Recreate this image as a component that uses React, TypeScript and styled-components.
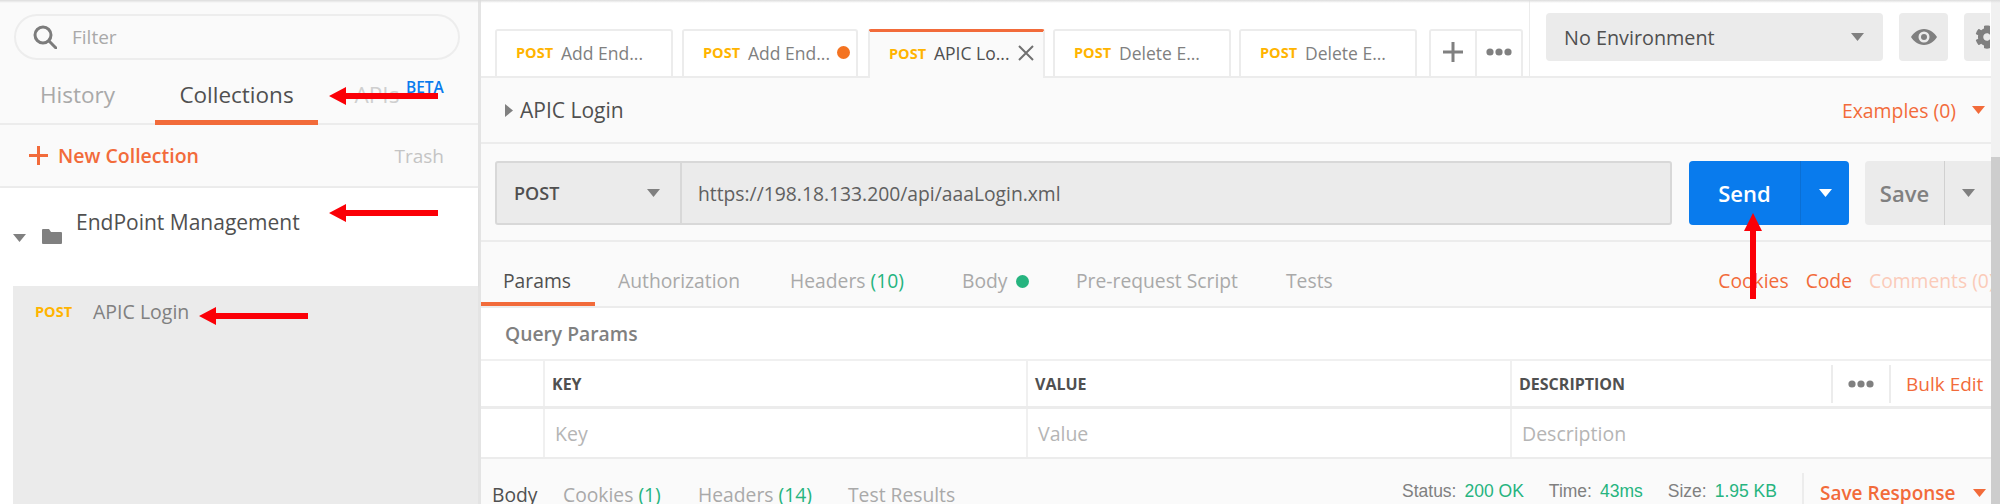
import React from 'react';
import styled, { createGlobalStyle } from 'styled-components';
import { FaCog } from 'react-icons/fa';

const orange = '#f26b3a';
const green = '#26b47f';
const amber = '#ffb400';

const GlobalStyle = createGlobalStyle`
  html, body { margin: 0; padding: 0; background: #fff; }
  * { box-sizing: border-box; }
  body { font-family: "Open Sans", "Noto Sans", sans-serif; }
`;

const Page = styled.div`
  position: relative;
  display: flex;
  width: 2000px;
  height: 504px;
  overflow: hidden;
  background: #fff;
`;

const TopShade = styled.div`
  position: absolute;
  left: 0;
  top: 0;
  right: 0;
  height: 3px;
  background: linear-gradient(#dcdcdc, rgba(255, 255, 255, 0));
`;

/* sidebar */
const Sidebar = styled.aside`
  width: 481px;
  flex: none;
  display: flex;
  flex-direction: column;
  border-right: 3px solid #e4e4e4;
  background: #fafafa;
`;

const SearchArea = styled.div`
  height: 60px;
  flex: none;
  padding: 14px 18px 0 14px;
`;

const SearchBox = styled.div`
  height: 46px;
  display: flex;
  align-items: center;
  gap: 15px;
  padding-left: 17px;
  border: 2px solid #ededed;
  border-radius: 23px;
  font-size: 19px;
  color: #a9a9a9;
`;

const SideTabs = styled.div`
  height: 65px;
  flex: none;
  display: flex;
  border-bottom: 2px solid #ececec;
`;

const SideTab = styled.div<{ $width: number; $active?: boolean }>`
  width: ${p => p.$width}px;
  height: 65px;
  flex: none;
  padding-top: 20px;
  text-align: center;
  font-size: 22.500px;
  line-height: 30px;
  color: ${p => (p.$active ? '#505050' : '#a9a9a9')};
  border-bottom: ${p => (p.$active ? `5px solid ${orange}` : 'none')};
`;

const SideTabFaded = styled(SideTab)`
  position: relative;
  color: #cfcfcf;
`;

const Beta = styled.span`
  position: absolute;
  left: 88px;
  top: 18px;
  font-size: 15.500px;
  line-height: 18px;
  font-weight: 600;
  color: #097bed;
`;

const ActionRow = styled.div`
  height: 63px;
  flex: none;
  display: flex;
  align-items: center;
  justify-content: space-between;
  padding: 0 34px 0 29px;
  border-bottom: 2px solid #ececec;
`;

const NewCollection = styled.div`
  display: flex;
  align-items: center;
  gap: 10px;
  font-size: 19.500px;
  font-weight: 600;
  color: ${orange};
`;

const Trash = styled.div`
  font-size: 19px;
  font-weight: 500;
  color: #c4c4c4;
`;

const FolderRow = styled.div`
  height: 98px;
  flex: none;
  display: flex;
  align-items: flex-start;
  padding: 20px 0 0 13px;
  background: #fff;
  box-shadow: 0 1px 2px rgba(0, 0, 0, 0.06);
`;

const FolderCaret = styled.svg`
  margin-top: 26px;
  flex: none;
`;

const FolderIcon = styled.svg`
  margin: 21px 0 0 16px;
  flex: none;
`;

const FolderName = styled.div`
  margin-left: 14px;
  font-size: 21px;
  line-height: 28px;
  color: #505050;
`;

const RequestArea = styled.div`
  flex: 1;
  background: #fff;
  padding-left: 13px;
`;

const RequestRow = styled.div`
  height: 100%;
  display: flex;
  align-items: flex-start;
  gap: 21px;
  padding: 13px 0 0 22px;
  background: #ebebeb;
  font-size: 19.500px;
  line-height: 26px;
  color: #808080;
`;

const Method = styled.span`
  font-size: 14.500px;
  font-weight: 700;
  color: ${amber};
`;

/* main */
const Main = styled.main`
  flex: 1;
  min-width: 0;
  display: flex;
  flex-direction: column;
`;

const TopBar = styled.div`
  height: 78px;
  flex: none;
  display: flex;
  padding-left: 14px;
  border-bottom: 2px solid #ececec;
  background: #fff;
`;

const Tabs = styled.div`
  width: 1035px;
  flex: none;
  display: flex;
  align-items: flex-end;
  border-right: 1px solid #ececec;
`;

const Tab = styled.div<{ $width: number; $gap: number; $active?: boolean }>`
  width: ${p => p.$width}px;
  margin-right: ${p => p.$gap}px;
  height: ${p => (p.$active ? 49 : 47)}px;
  margin-bottom: ${p => (p.$active ? -2 : 0)}px;
  flex: none;
  display: flex;
  align-items: center;
  gap: 8px;
  padding: ${p => (p.$active ? '0 0 4px 19px' : '0 0 2px 19px')};
  background: ${p => (p.$active ? '#fafafa' : '#fff')};
  border: 2px solid #ececec;
  border-top: ${p => (p.$active ? `3px solid ${orange}` : '2px solid #ececec')};
  border-bottom: none;
  border-radius: 3px 3px 0 0;
  font-size: 17.500px;
  color: ${p => (p.$active ? '#505050' : '#808080')};
  white-space: nowrap;
`;

const UnsavedDot = styled.span`
  width: 13px;
  height: 13px;
  flex: none;
  margin-left: -1px;
  border-radius: 50%;
  background: #f47321;
`;

const CloseIcon = styled.svg`
  flex: none;
`;

const TabButtons = styled.div`
  width: 94px;
  height: 47px;
  margin-left: 4px;
  display: flex;
  border: 2px solid #ececec;
  border-bottom: none;
  border-radius: 3px 3px 0 0;
`;

const TabButton = styled.div`
  flex: 1;
  display: flex;
  align-items: center;
  justify-content: center;
  padding-bottom: 4px;
  & + & { border-left: 2px solid #ececec; }
`;

const EnvArea = styled.div`
  flex: 1;
  display: flex;
  align-items: flex-start;
  padding: 13px 0 0 16px;
  gap: 16px;
  overflow: hidden;
`;

const EnvSelect = styled.div`
  width: 337px;
  height: 48px;
  flex: none;
  display: flex;
  align-items: center;
  justify-content: space-between;
  padding: 0 19px 0 18px;
  background: #ebebeb;
  border-radius: 4px;
  font-size: 19.800px;
  color: #505050;
`;

const EnvButton = styled.div`
  width: 49px;
  height: 48px;
  flex: none;
  display: flex;
  align-items: center;
  justify-content: center;
  background: #ebebeb;
  border-radius: 4px;
`;

const GearButton = styled(EnvButton)`
  width: 26px;
  justify-content: flex-start;
  padding-left: 11px;
  overflow: hidden;
  border-radius: 4px 0 0 4px;

  svg { flex: none; }
`;

const NameRow = styled.div`
  height: 66px;
  flex: none;
  display: flex;
  align-items: center;
  justify-content: space-between;
  padding: 0 6px 0 24px;
  background: #fafafa;
  border-bottom: 2px solid #ececec;
`;

const RequestName = styled.div`
  display: flex;
  align-items: center;
  gap: 7px;
  font-size: 21px;
  font-weight: 500;
  color: #505050;
`;

const Examples = styled.div`
  display: flex;
  align-items: center;
  gap: 16px;
  font-size: 19.400px;
  color: ${orange};
`;

const UrlRow = styled.div`
  height: 98px;
  flex: none;
  display: flex;
  padding: 17px 0 0 14px;
  background: #fafafa;
  border-bottom: 2px solid #ececec;
`;

const UrlBar = styled.div`
  width: 1177px;
  height: 64px;
  flex: none;
  display: flex;
  background: #ebebeb;
  border: 2px solid #d8d8d8;
  border-radius: 3px;
`;

const MethodSelect = styled.div`
  width: 185px;
  flex: none;
  display: flex;
  align-items: center;
  justify-content: space-between;
  padding: 0 20px 0 17px;
  border-right: 2px solid #d8d8d8;
  font-size: 18px;
  font-weight: 600;
  color: #505050;
`;

const UrlText = styled.div`
  display: flex;
  align-items: center;
  padding-left: 16px;
  font-size: 19.300px;
  color: #606060;
`;

const SplitButton = styled.div<{ $primary?: boolean; $main: number; $side: number }>`
  height: 64px;
  flex: none;
  display: grid;
  grid-template-columns: ${p => p.$main}px ${p => p.$side}px;
  margin-left: 17px;
  border-radius: 4px;
  font-size: 22px;
  font-weight: 600;
  color: ${p => (p.$primary ? '#fff' : '#808080')};
  background: ${p => (p.$primary ? '#097bed' : '#ebebeb')};
  overflow: hidden;

  > div {
    display: flex;
    align-items: center;
    justify-content: center;
  }
  > div + div {
    border-left: 1px solid ${p => (p.$primary ? '#0a6fd4' : '#d0d0d0')};
  }
`;

const SaveButton = styled(SplitButton)`
  margin-left: 16px;
  border-radius: 4px 0 0 4px;
`;

const ParamTabs = styled.div`
  height: 66px;
  flex: none;
  display: flex;
  align-items: flex-start;
  background: #fafafa;
  border-bottom: 2px solid #ececec;
  font-size: 19.300px;
  white-space: nowrap;
  overflow: hidden;
`;

const ParamTab = styled.div<{ $width: number; $active?: boolean }>`
  width: ${p => p.$width}px;
  height: 65px;
  flex: none;
  margin-right: ${p => (p.$active ? 23 : 0)}px;
  padding: 25px 0 0 ${p => (p.$active ? 22 : 0)}px;
  line-height: 28px;
  color: ${p => (p.$active ? '#505050' : '#a9a9a9')};
  border-bottom: ${p => (p.$active ? `5px solid ${orange}` : 'none')};
`;

const Count = styled.span`
  color: ${green};
`;

const BodyDot = styled.span`
  display: inline-block;
  width: 13px;
  height: 13px;
  margin-left: 8px;
  border-radius: 50%;
  background: ${green};
`;

const ParamLinks = styled.div`
  display: flex;
  gap: 17px;
  margin-left: auto;
  padding-top: 25px;
  line-height: 28px;
  color: ${orange};
`;

const Comments = styled.span`
  width: 122px;
  color: #fbcbb9;
  overflow: hidden;
`;

const SectionTitle = styled.div`
  height: 53px;
  flex: none;
  padding: 12px 0 0 24px;
  background: #fff;
  border-bottom: 2px solid #f0f0f0;
  font-size: 19.300px;
  line-height: 28px;
  font-weight: 600;
  color: #808080;
`;

const TableRow = styled.div<{ $height: number; $rule: number }>`
  height: ${p => p.$height}px;
  flex: none;
  display: grid;
  grid-template-columns: 62px 483px 484px 1fr;
  background: #fff;
  border-bottom: ${p => p.$rule}px solid #ececec;
`;

const Cell = styled.div`
  display: flex;
  align-items: center;
  padding-left: 7px;
  border-left: 2px solid #f0f0f0;
  font-size: 16px;
  font-weight: 700;
  color: #505050;

  &:first-child { border-left: none; }
`;

const InputCell = styled(Cell)`
  padding-left: 10px;
  font-size: 19.500px;
  font-weight: 400;
  color: #b5b5b5;
`;

const BulkGroup = styled.div`
  display: flex;
  align-items: center;
  margin-left: auto;
  height: 100%;
  color: ${orange};
  font-size: 19px;
  font-weight: 400;
`;

const BulkDots = styled.div`
  width: 60px;
  height: 38px;
  display: flex;
  align-items: center;
  justify-content: center;
  border-left: 2px solid #ececec;
  border-right: 2px solid #ececec;
`;

const BulkEdit = styled.span`
  width: 100px;
  padding-left: 15px;
  white-space: nowrap;
`;

const ResponseBar = styled.div`
  flex: 1;
  min-height: 0;
  display: flex;
  align-items: flex-start;
  background: #fafafa;
  padding-top: 22px;
  font-size: 19.300px;
  line-height: 28px;
  white-space: nowrap;
  overflow: hidden;
`;

const ResponseTab = styled.div<{ $width: number; $active?: boolean }>`
  width: ${p => p.$width}px;
  flex: none;
  padding-left: ${p => (p.$active ? 11 : 0)}px;
  color: ${p => (p.$active ? '#505050' : '#a9a9a9')};
`;

const Stats = styled.div`
  display: flex;
  gap: 25px;
  width: 400px;
  margin: -4px 0 0 auto;
  font-family: "Liberation Sans", Arial, sans-serif;
  font-size: 17.500px;
  color: #808080;
`;

const Stat = styled.span`
  display: flex;
  gap: 8px;
`;

const StatValue = styled.span`
  color: ${green};
`;

const SaveResponse = styled.div`
  width: 189px;
  flex: none;
  display: flex;
  align-items: center;
  gap: 17px;
  height: 40px;
  margin-top: -8px;
  padding-left: 16px;
  border-left: 2px solid #ececec;
  font-size: 19px;
  font-weight: 600;
  color: ${orange};
`;

const Scrollbar = styled.div`
  width: 9px;
  flex: none;
  background: linear-gradient(#f1f1f1 157px, #cdcdcd 157px);
`;

/* annotation arrows over the screenshot */
const ArrowMark = styled.svg<{ $x: number; $y: number }>`
  position: absolute;
  left: ${p => p.$x}px;
  top: ${p => p.$y}px;
`;

const Caret = ({ color = '#808080', size = 13 }: { color?: string; size?: number }) => (
  <svg width={size} height={Math.round(size * 0.62)} viewBox="0 0 13 8">
    <path d="M0 0h13L6.500 8z" fill={color} />
  </svg>
);

const Dots = ({ color = '#808080' }: { color?: string }) => (
  <svg width="26" height="8" viewBox="0 0 26 8">
    <circle cx="4" cy="4" r="3.6" fill={color} />
    <circle cx="13" cy="4" r="3.6" fill={color} />
    <circle cx="22" cy="4" r="3.6" fill={color} />
  </svg>
);

const LeftArrow = ({ x, y }: { x: number; y: number }) => (
  <ArrowMark $x={x} $y={y} width="109" height="18" viewBox="0 0 109 18">
    <path d="M0 9 17 0v6h92v6H17v6z" fill="#fb0007" />
  </ArrowMark>
);

const tabs = [
  { name: 'Add End...', width: 178, gap: 9 },
  { name: 'Add End...', width: 176, gap: 10, dot: true },
  { name: 'APIC Lo...', width: 177, gap: 8, active: true },
  { name: 'Delete E...', width: 178, gap: 8 },
  { name: 'Delete E...', width: 178, gap: 8 },
];

export default function App() {
  return (
    <Page>
      <GlobalStyle />
      <Sidebar>
        <SearchArea>
          <SearchBox>
            <svg width="24" height="24" viewBox="0 0 24 24" fill="none" stroke="#7c7c7c" strokeWidth="3">
              <circle cx="10" cy="10" r="8" />
              <path d="m16 16 7 7" strokeLinecap="round" />
            </svg>
            Filter
          </SearchBox>
        </SearchArea>
        <SideTabs>
          <SideTab $width={155}>History</SideTab>
          <SideTab $width={163} $active>Collections</SideTab>
          <SideTabFaded $width={118}>
            APIs
            <Beta>BETA</Beta>
          </SideTabFaded>
        </SideTabs>
        <ActionRow>
          <NewCollection>
            <svg width="19" height="19" viewBox="0 0 19 19" fill={orange}>
              <path d="M8 0h3v8h8v3h-8v8H8v-8H0V8h8z" />
            </svg>
            New Collection
          </NewCollection>
          <Trash>Trash</Trash>
        </ActionRow>
        <FolderRow>
          <FolderCaret width="13" height="8" viewBox="0 0 13 8">
            <path d="M0 0h13L6.500 8z" fill="#808080" />
          </FolderCaret>
          <FolderIcon width="20" height="15" viewBox="0 0 20 15">
            <path d="M0 1q0-1 1-1h6l2 3h10q1 0 1 1v10q0 1-1 1H1q-1 0-1-1z" fill="#808080" />
          </FolderIcon>
          <FolderName>EndPoint Management</FolderName>
        </FolderRow>
        <RequestArea>
          <RequestRow>
            <Method>POST</Method>
            APIC Login
          </RequestRow>
        </RequestArea>
      </Sidebar>

      <Main>
        <TopBar>
          <Tabs>
            {tabs.map((tab, i) => (
              <Tab key={i} $width={tab.width} $gap={tab.gap} $active={tab.active}>
                <Method>POST</Method>
                {tab.name}
                {tab.dot && <UnsavedDot />}
                {tab.active && (
                  <CloseIcon width="16" height="16" viewBox="0 0 16 16" stroke="#707070" strokeWidth="2">
                    <path d="m1 1 14 14M15 1 1 15" />
                  </CloseIcon>
                )}
              </Tab>
            ))}
            <TabButtons>
              <TabButton>
                <svg width="20" height="20" viewBox="0 0 20 20" fill="#808080">
                  <path d="M8.500 0h3v8.500h8.500v3h-8.500v8.500h-3v-8.500H0v-3h8.500z" />
                </svg>
              </TabButton>
              <TabButton>
                <Dots />
              </TabButton>
            </TabButtons>
          </Tabs>
          <EnvArea>
            <EnvSelect>
              No Environment
              <Caret />
            </EnvSelect>
            <EnvButton>
              <svg width="26" height="16" viewBox="0 0 26 16">
                <path
                  fillRule="evenodd"
                  d="M13 0c6 0 10.500 4 13 8-2.500 4-7 8-13 8S2.500 12 0 8c2.500-4 7-8 13-8zm0 2.500a5.500 5.500 0 1 0 0 11 5.500 5.500 0 0 0 0-11z"
                  fill="#808080"
                />
                <circle cx="13" cy="8" r="3" fill="#808080" />
              </svg>
            </EnvButton>
            <GearButton>
              <FaCog size={24} color="#808080" />
            </GearButton>
          </EnvArea>
        </TopBar>

        <NameRow>
          <RequestName>
            <svg width="8" height="13" viewBox="0 0 8 13">
              <path d="M0 0v13l8-6.500z" fill="#808080" />
            </svg>
            APIC Login
          </RequestName>
          <Examples>
            Examples (0)
            <Caret color={orange} />
          </Examples>
        </NameRow>

        <UrlRow>
          <UrlBar>
            <MethodSelect>
              POST
              <Caret />
            </MethodSelect>
            <UrlText>https://198.18.133.200/api/aaaLogin.xml</UrlText>
          </UrlBar>
          <SplitButton $primary $main={111} $side={49}>
            <div>Send</div>
            <div>
              <Caret color="#fff" />
            </div>
          </SplitButton>
          <SaveButton $main={79} $side={47}>
            <div>Save</div>
            <div>
              <Caret />
            </div>
          </SaveButton>
        </UrlRow>

        <ParamTabs>
          <ParamTab $width={114} $active>Params</ParamTab>
          <ParamTab $width={172}>Authorization</ParamTab>
          <ParamTab $width={172}>
            Headers <Count>(10)</Count>
          </ParamTab>
          <ParamTab $width={114}>
            Body
            <BodyDot />
          </ParamTab>
          <ParamTab $width={210}>Pre-request Script</ParamTab>
          <ParamTab $width={60}>Tests</ParamTab>
          <ParamLinks>
            <span>Cookies</span>
            <span>Code</span>
            <Comments>Comments (0)</Comments>
          </ParamLinks>
        </ParamTabs>

        <SectionTitle>Query Params</SectionTitle>
        <TableRow $height={48} $rule={3}>
          <Cell />
          <Cell>KEY</Cell>
          <Cell>VALUE</Cell>
          <Cell>
            DESCRIPTION
            <BulkGroup>
              <BulkDots>
                <Dots />
              </BulkDots>
              <BulkEdit>Bulk Edit</BulkEdit>
            </BulkGroup>
          </Cell>
        </TableRow>
        <TableRow $height={50} $rule={2}>
          <Cell />
          <InputCell>Key</InputCell>
          <InputCell>Value</InputCell>
          <InputCell>Description</InputCell>
        </TableRow>

        <ResponseBar>
          <ResponseTab $width={82} $active>Body</ResponseTab>
          <ResponseTab $width={135}>
            Cookies <Count>(1)</Count>
          </ResponseTab>
          <ResponseTab $width={150}>
            Headers <Count>(14)</Count>
          </ResponseTab>
          <ResponseTab $width={135}>Test Results</ResponseTab>
          <Stats>
            <Stat>
              Status: <StatValue>200 OK</StatValue>
            </Stat>
            <Stat>
              Time: <StatValue>43ms</StatValue>
            </Stat>
            <Stat>
              Size: <StatValue>1.95 KB</StatValue>
            </Stat>
          </Stats>
          <SaveResponse>
            Save Response
            <Caret color={orange} />
          </SaveResponse>
        </ResponseBar>
      </Main>
      <Scrollbar />

      <TopShade />
      <LeftArrow x={329} y={87} />
      <LeftArrow x={329} y={204} />
      <LeftArrow x={199} y={307} />
      <ArrowMark $x={1744} $y={213} width="18" height="86" viewBox="0 0 18 86">
        <path d="M9 0l9 18h-6v68H6V18H0z" fill="#fb0007" />
      </ArrowMark>
    </Page>
  );
}
